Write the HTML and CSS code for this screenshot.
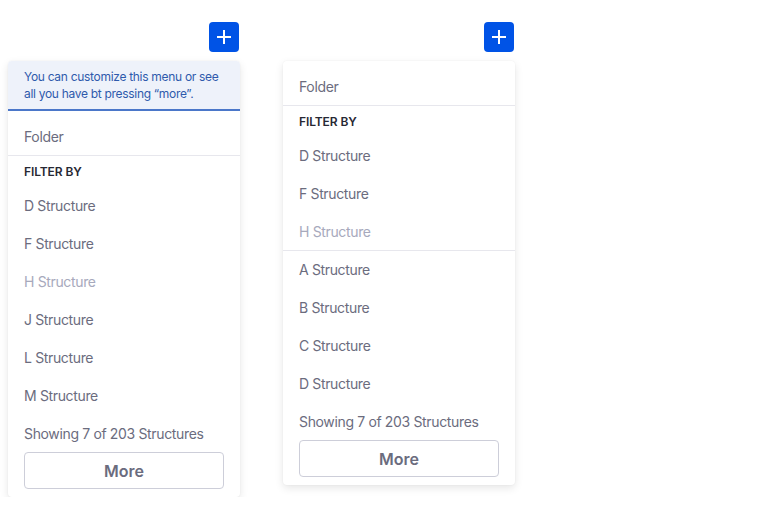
FILE: index.html
```html
<!DOCTYPE html>
<html lang="en">
<head>
    <meta charset="UTF-8">
    <title>Dropdown Menus</title>
    <link rel="stylesheet" href="styles.css">
</head>
<body>
    <div class="page">
        <!-- Menu with help message -->
        <div class="menu-col">
            <button class="add-btn" aria-label="Add">
                <svg width="16" height="16" viewBox="0 0 16 16"><path d="M8 1v14M1 8h14" stroke="#fff" stroke-width="2" fill="none"/></svg>
            </button>
            <div class="dropdown">
                <div class="help">You can customize this menu or see all you have bt pressing “more”.</div>
                <div class="item folder">Folder</div>
                <div class="divider"></div>
                <div class="header">Filter by</div>
                <div class="item">D Structure</div>
                <div class="item">F Structure</div>
                <div class="item disabled">H Structure</div>
                <div class="item">J Structure</div>
                <div class="item">L Structure</div>
                <div class="item">M Structure</div>
                <div class="item count">Showing 7 of 203 Structures</div>
                <div class="footer"><button class="more-btn">More</button></div>
            </div>
        </div>

        <!-- Menu without help message -->
        <div class="menu-col">
            <button class="add-btn" aria-label="Add">
                <svg width="16" height="16" viewBox="0 0 16 16"><path d="M8 1v14M1 8h14" stroke="#fff" stroke-width="2" fill="none"/></svg>
            </button>
            <div class="dropdown">
                <div class="item folder">Folder</div>
                <div class="divider"></div>
                <div class="header">Filter by</div>
                <div class="item">D Structure</div>
                <div class="item">F Structure</div>
                <div class="item disabled">H Structure</div>
                <div class="divider overlap"></div>
                <div class="item">A Structure</div>
                <div class="item">B Structure</div>
                <div class="item">C Structure</div>
                <div class="item">D Structure</div>
                <div class="item count">Showing 7 of 203 Structures</div>
                <div class="footer"><button class="more-btn">More</button></div>
            </div>
        </div>
    </div>
</body>
</html>
```

FILE: styles.css
```css
/* General page */
body {
    margin: 0;
    background: #fff;
    font-family: Inter, "Noto Sans", sans-serif;
    color: #6b6c7e;
}

.page {
    display: flex;
    align-items: flex-start;
    gap: 43px;
    padding: 22px 0 0 8px;
}

.menu-col {
    display: flex;
    flex-direction: column;
    align-items: flex-end;
    gap: 9px;
    width: 232px;
}

/* Plus button */
.add-btn {
    width: 30px;
    height: 30px;
    margin-right: 1px;
    padding: 0;
    border: none;
    border-radius: 4px;
    background: #0053e6;
    display: flex;
    align-items: center;
    justify-content: center;
}

/* Dropdown panel */
.dropdown {
    width: 100%;
    background: #fff;
    border-radius: 4px;
    box-shadow: 0 3px 8px rgba(0, 0, 0, 0.1), 0 0 2px rgba(0, 0, 0, 0.05);
    overflow: hidden;
}

.help {
    background: #eef2fa;
    color: #2e5aac;
    border-bottom: 2px solid #4b77c9;
    font-size: 12px;
    letter-spacing: -0.3px;
    line-height: 17px;
    padding: 7px 16px;
}

.item {
    font-size: 14px;
    letter-spacing: -0.35px;
    height: 38px;
    line-height: 38px;
    padding: 0 16px;
    white-space: nowrap;
}

.item.folder {
    height: 36px;
    line-height: 36px;
    padding-top: 8px;
}

.item.disabled {
    color: #a7a9bc;
}

.item.count {
    height: 37px;
    line-height: 37px;
}

.divider {
    height: 1px;
    background: #e7e7ed;
}

.divider.overlap {
    margin-top: -1px;
}

.header {
    font-size: 12px;
    font-weight: 600;
    letter-spacing: -0.1px;
    text-transform: uppercase;
    color: #272833;
    height: 31px;
    line-height: 31px;
    padding: 0 16px;
}

.footer {
    padding: 0 16px 8px;
}

.more-btn {
    width: 100%;
    height: 37px;
    background: #fff;
    border: 1px solid #cdced9;
    border-radius: 4px;
    font-family: inherit;
    font-size: 16px;
    font-weight: 600;
    color: #6b6c7e;
}
```
